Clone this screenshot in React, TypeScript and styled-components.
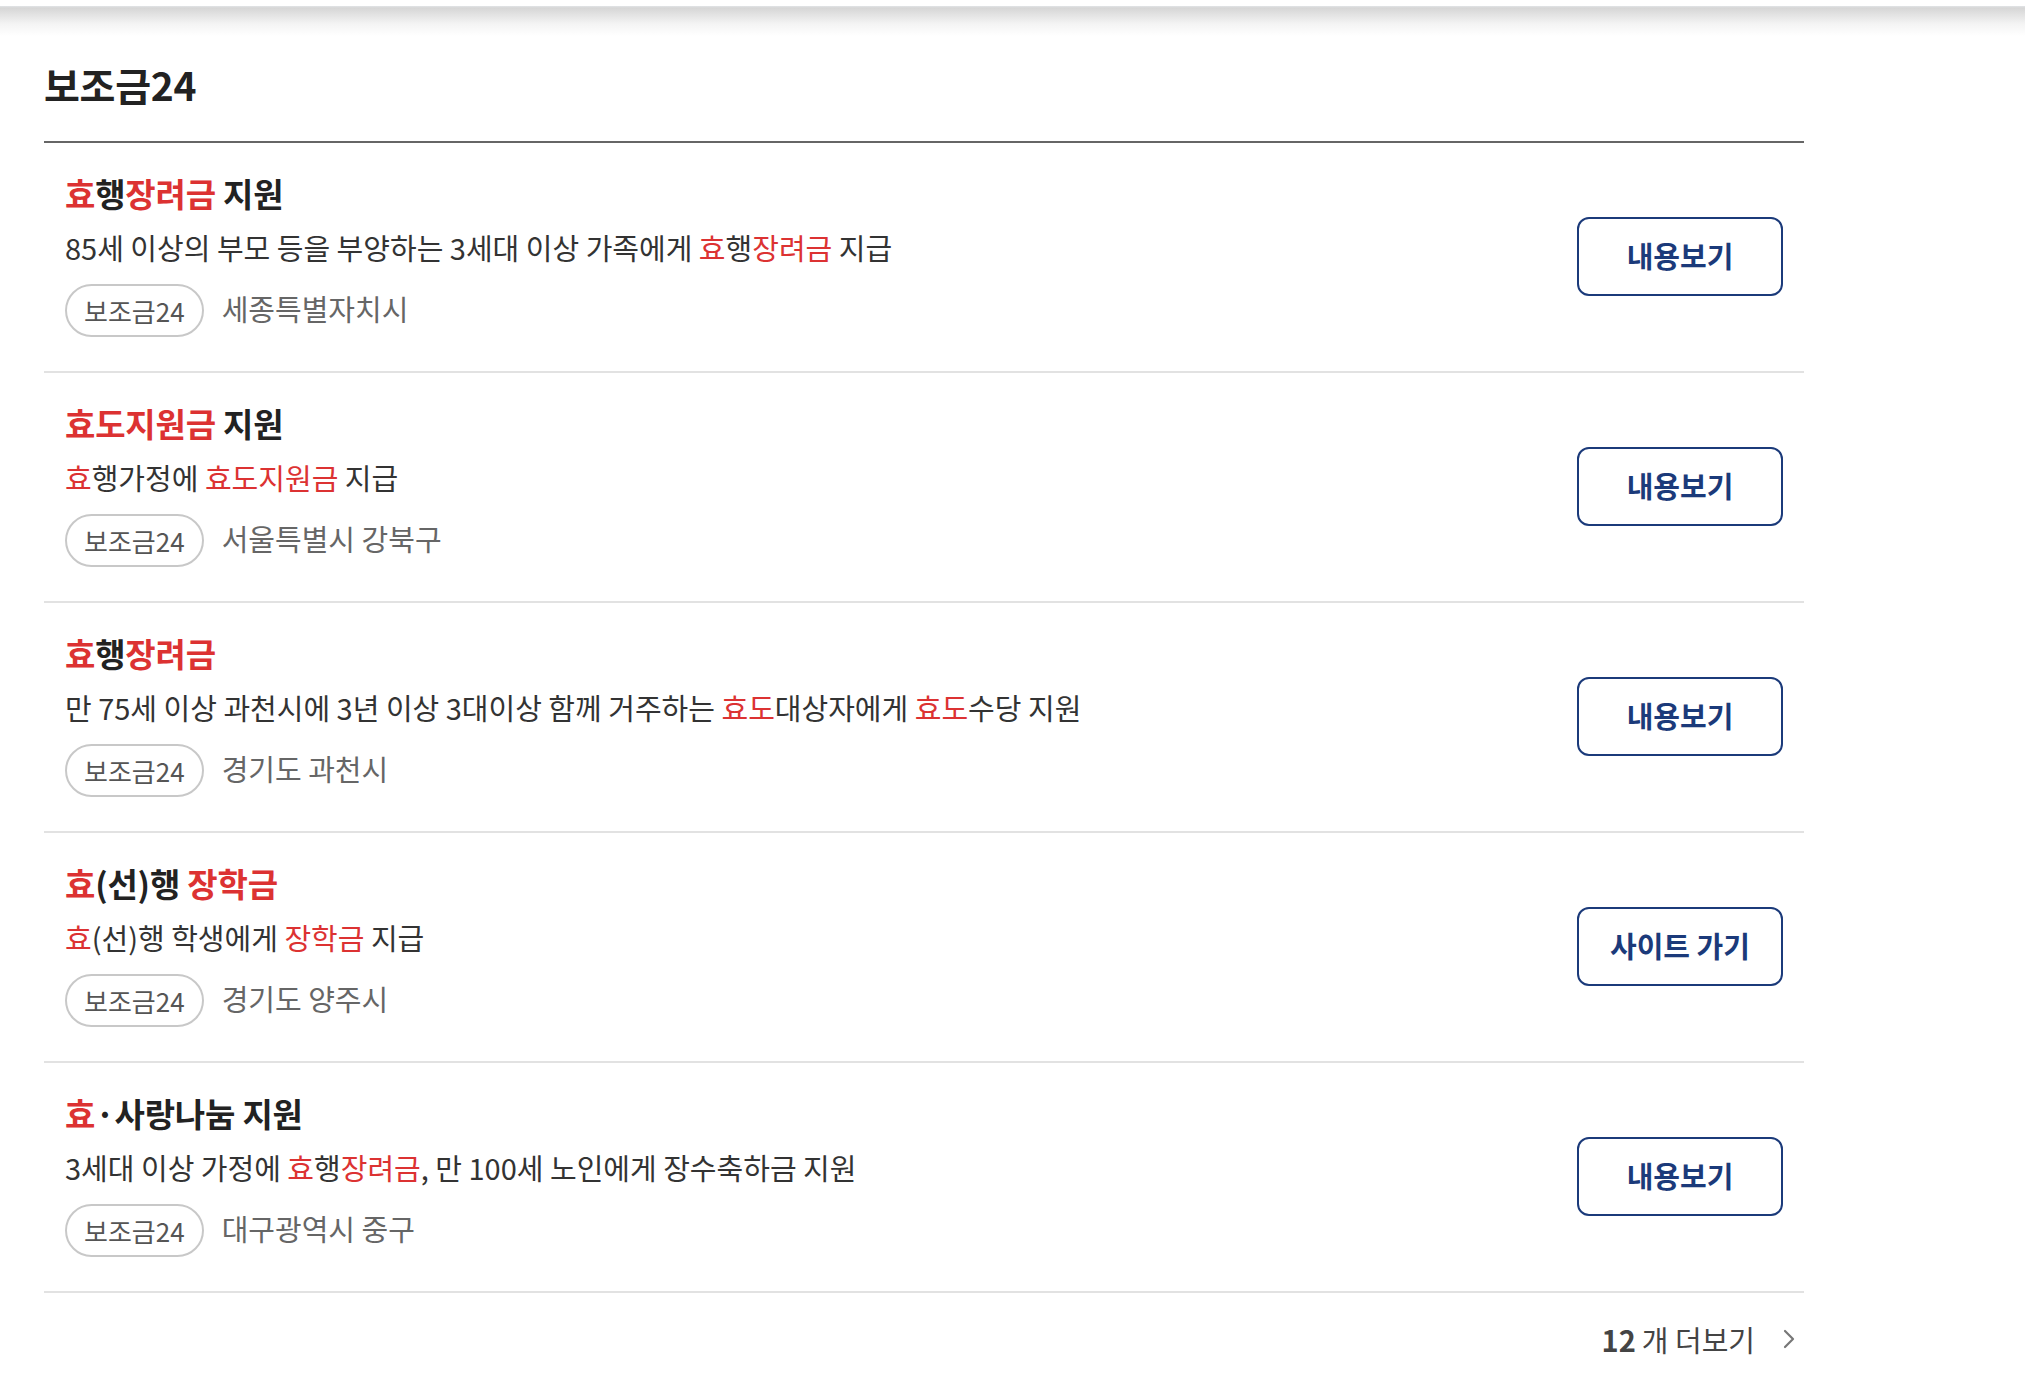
import React from "react";
import styled, { createGlobalStyle } from "styled-components";

const GlobalStyle = createGlobalStyle`
  html, body {
    margin: 0;
    padding: 0;
    background: #ffffff;
    font-family: "Noto Sans CJK KR", "Noto Sans", sans-serif;
    color: #222;
  }
  * { box-sizing: border-box; }
`;

const Page = styled.div`
  width: 2025px;
  min-height: 1386px;
  background: #fff;
`;

const TopShade = styled.div`
  margin-top: 6px;
  height: 30px;
  background: linear-gradient(to bottom, #e1e4e7 0px, #d6d6d6 2px, #f4f4f4 60%, #ffffff 100%);
`;

const Section = styled.section`
  margin-left: 44px;
  width: 1760px;
`;

const Heading = styled.h2`
  margin: 0;
  padding: 23px 0 32px;
  font-size: 39px;
  line-height: 50px;
  font-weight: 700;
  letter-spacing: -0.3px;
  color: #222;
  border-bottom: 2px solid #666;
`;

const List = styled.ul`
  list-style: none;
  margin: 0;
  padding: 0;
`;

const Item = styled.li`
  display: flex;
  align-items: center;
  justify-content: space-between;
  padding: 26px 21px 34px 21px;
  border-bottom: 2px solid #e2e2e2;
`;

const Info = styled.div`
  display: flex;
  flex-direction: column;
`;

const Title = styled.h3`
  margin: 0;
  padding-top: 2px;
  font-size: 33px;
  line-height: 44px;
  font-weight: 700;
  letter-spacing: -0.2px;
  color: #222;
`;

const Desc = styled.p`
  margin: 12px 0 0;
  font-size: 29px;
  line-height: 40px;
  font-weight: 400;
  letter-spacing: 0;
  color: #333;
`;

const Hl = styled.span`
  color: #dc3232;
`;

const Meta = styled.div`
  display: flex;
  align-items: center;
  gap: 18px;
  margin-top: 17px;
`;

const Tag = styled.span`
  display: inline-flex;
  align-items: center;
  justify-content: center;
  height: 53px;
  padding: 0 17px;
  border: 2px solid #c8c8c8;
  border-radius: 27px;
  font-size: 26px;
  letter-spacing: 0;
  color: #555;
`;

const Region = styled.span`
  padding-bottom: 5px;
  font-size: 29px;
  letter-spacing: 0;
  color: #666;
`;

const ActionButton = styled.button`
  width: 206px;
  height: 79px;
  margin-top: 7px;
  padding: 0 0 4px;
  border: 2px solid #1b3a7a;
  border-radius: 12px;
  background: #fff;
  color: #1b3a7a;
  font-family: inherit;
  font-size: 29px;
  font-weight: 700;
  letter-spacing: 0;
  cursor: pointer;
`;

const Footer = styled.div`
  display: flex;
  justify-content: flex-end;
  align-items: center;
  padding: 26px 9px 0 0;
`;

const MoreLink = styled.a`
  display: inline-flex;
  align-items: center;
  gap: 28px;
  color: #444;
  text-decoration: none;
  font-size: 29px;
  line-height: 40px;
  letter-spacing: 0;
`;

const Count = styled.strong`
  font-weight: 700;
  margin-right: 6px;
`;

type Seg = string | { h: string };

interface Entry {
  title: Seg[];
  desc: Seg[];
  region: string;
  action: string;
}

const entries: Entry[] = [
  {
    title: [{ h: "효" }, "행", { h: "장려금" }, " 지원"],
    desc: ["85세 이상의 부모 등을 부양하는 3세대 이상 가족에게 ", { h: "효" }, "행", { h: "장려금" }, " 지급"],
    region: "세종특별자치시",
    action: "내용보기",
  },
  {
    title: [{ h: "효도지원금" }, " 지원"],
    desc: [{ h: "효" }, "행가정에 ", { h: "효도지원금" }, " 지급"],
    region: "서울특별시 강북구",
    action: "내용보기",
  },
  {
    title: [{ h: "효" }, "행", { h: "장려금" }],
    desc: ["만 75세 이상 과천시에 3년 이상 3대이상 함께 거주하는 ", { h: "효도" }, "대상자에게 ", { h: "효도" }, "수당 지원"],
    region: "경기도 과천시",
    action: "내용보기",
  },
  {
    title: [{ h: "효" }, "(선)행 ", { h: "장학금" }],
    desc: [{ h: "효" }, "(선)행 학생에게 ", { h: "장학금" }, " 지급"],
    region: "경기도 양주시",
    action: "사이트 가기",
  },
  {
    title: [{ h: "효" }, "·사랑나눔 지원"],
    desc: ["3세대 이상 가정에 ", { h: "효" }, "행", { h: "장려금" }, ", 만 100세 노인에게 장수축하금 지원"],
    region: "대구광역시 중구",
    action: "내용보기",
  },
];

const renderSegs = (segs: Seg[]) =>
  segs.map((s, i) => (typeof s === "string" ? <React.Fragment key={i}>{s}</React.Fragment> : <Hl key={i}>{s.h}</Hl>));

const Chevron = () => (
  <svg width="12" height="22" viewBox="0 0 12 22" fill="none">
    <polyline points="2,3 10,11 2,19" stroke="#777" strokeWidth="2.2" strokeLinecap="round" strokeLinejoin="round" />
  </svg>
);

export default function App() {
  return (
    <Page>
      <GlobalStyle />
      <TopShade />
      <Section>
        <Heading>보조금24</Heading>
        <List>
          {entries.map((e, i) => (
            <Item key={i}>
              <Info>
                <Title>{renderSegs(e.title)}</Title>
                <Desc>{renderSegs(e.desc)}</Desc>
                <Meta>
                  <Tag>보조금24</Tag>
                  <Region>{e.region}</Region>
                </Meta>
              </Info>
              <ActionButton type="button">{e.action}</ActionButton>
            </Item>
          ))}
        </List>
        <Footer>
          <MoreLink href="#">
            <span>
              <Count>12</Count>개 더보기
            </span>
            <Chevron />
          </MoreLink>
        </Footer>
      </Section>
    </Page>
  );
}
